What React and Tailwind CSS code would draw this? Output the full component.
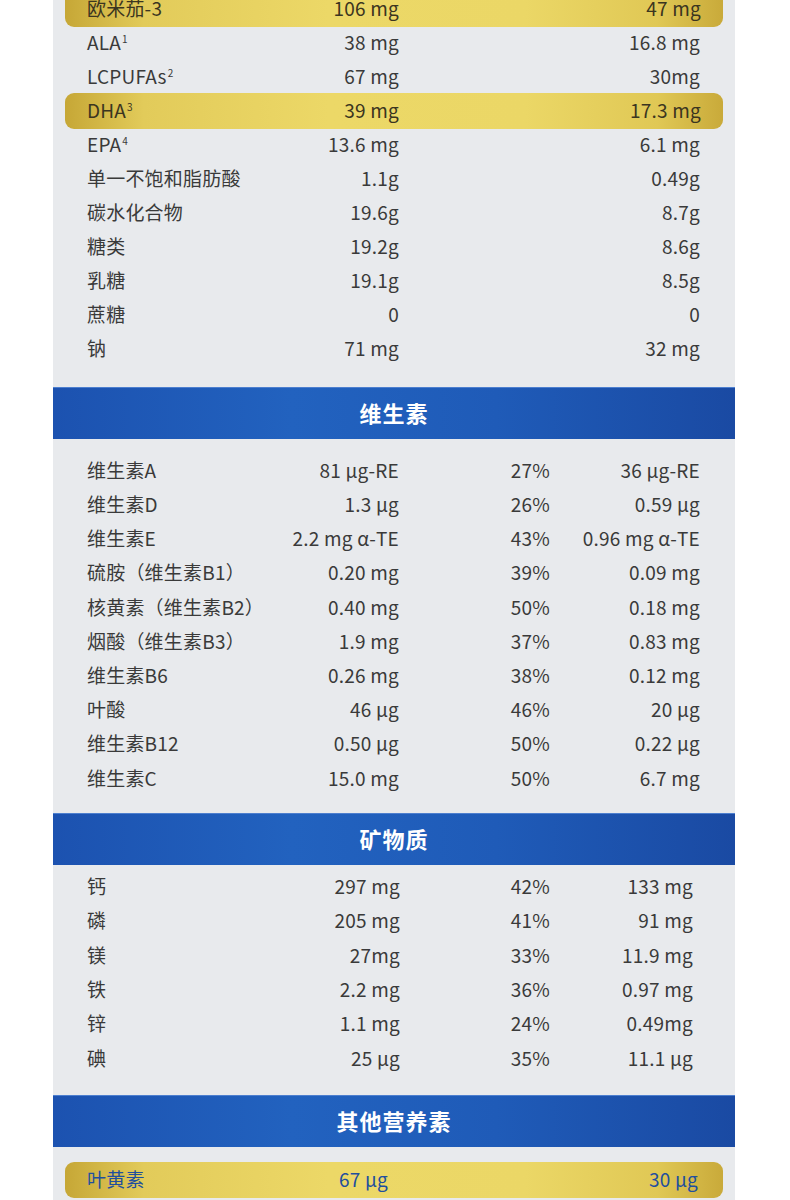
import React from "react";

const FONT = { fontFamily: '"Noto Sans CJK SC", "Noto Sans", sans-serif' };

const Sup = ({ n }) => (
  <sup className="text-[10px] relative -top-[7px] ml-[1px]">{n}</sup>
);

const sec1 = [
  { l: "欧米茄-3", a: "106 mg", b: "47 mg", y: true },
  { l: <>ALA<Sup n="1" /></>, a: "38 mg", b: "16.8 mg" },
  { l: <>LCPUFAs<Sup n="2" /></>, a: "67 mg", b: "30mg" },
  { l: <>DHA<Sup n="3" /></>, a: "39 mg", b: "17.3 mg", y: true },
  { l: <>EPA<Sup n="4" /></>, a: "13.6 mg", b: "6.1 mg" },
  { l: "单一不饱和脂肪酸", a: "1.1g", b: "0.49g" },
  { l: "碳水化合物", a: "19.6g", b: "8.7g" },
  { l: "糖类", a: "19.2g", b: "8.6g" },
  { l: "乳糖", a: "19.1g", b: "8.5g" },
  { l: "蔗糖", a: "0", b: "0" },
  { l: "钠", a: "71 mg", b: "32 mg" },
];

const vit = [
  ["维生素A", "81 µg-RE", "27%", "36 µg-RE"],
  ["维生素D", "1.3 µg", "26%", "0.59 µg"],
  ["维生素E", "2.2 mg α-TE", "43%", "0.96 mg α-TE"],
  ["硫胺（维生素B1）", "0.20 mg", "39%", "0.09 mg"],
  ["核黄素（维生素B2）", "0.40 mg", "50%", "0.18 mg"],
  ["烟酸（维生素B3）", "1.9 mg", "37%", "0.83 mg"],
  ["维生素B6", "0.26 mg", "38%", "0.12 mg"],
  ["叶酸", "46 µg", "46%", "20 µg"],
  ["维生素B12", "0.50 µg", "50%", "0.22 µg"],
  ["维生素C", "15.0 mg", "50%", "6.7 mg"],
];

const min = [
  ["钙", "297 mg", "42%", "133 mg"],
  ["磷", "205 mg", "41%", "91 mg"],
  ["镁", "27mg", "33%", "11.9 mg"],
  ["铁", "2.2 mg", "36%", "0.97 mg"],
  ["锌", "1.1 mg", "24%", "0.49mg"],
  ["碘", "25 µg", "35%", "11.1 µg"],
];

const yellowBg =
  "bg-[linear-gradient(90deg,#c6a736_0%,#e2cb5a_12%,#ecd867_40%,#ebd766_70%,#e0c855_90%,#c9aa3a_100%)]";

const Header = ({ title }) => (
  <div className="h-[52px] pb-[2px] flex items-center justify-center bg-[linear-gradient(90deg,#1c52b0_0%,#2262bf_35%,#1f5bb8_65%,#1a4aa3_100%)] border-t border-[#4d7fcf]">
    <span className="text-white font-bold text-[22px] tracking-[1px]">{title}</span>
  </div>
);

export default function App() {
  return (
    <div className="w-[790px] h-[1200px] bg-white overflow-hidden" style={FONT}>
      <div className="ml-[53px] w-[682px] h-[1220px] bg-[#e8eaed] text-[19px] text-[#3a3a3a] -mt-[8px] tracking-[0.2px]">
        {/* Section 1 */}
        <div>
          {sec1.map((r, i) =>
            r.y ? (
              <div key={i} className="h-[34px] px-[12px] flex items-center">
                <div
                  className={`h-[36px] w-full rounded-[9px] ${yellowBg} grid grid-cols-[160px_152px_1fr] items-center pl-[22px] pr-[22px] pb-[2px] text-[#3b3520]`}
                >
                  <div>{r.l}</div>
                  <div className="text-right">{r.a}</div>
                  <div className="text-right">{r.b}</div>
                </div>
              </div>
            ) : (
              <div
                key={i}
                className="h-[34px] pb-[2px] grid grid-cols-[160px_152px_301px] items-center pl-[34px]"
              >
                <div>{r.l}</div>
                <div className="text-right">{r.a}</div>
                <div className="text-right">{r.b}</div>
              </div>
            )
          )}
        </div>

        <div className="mt-[21px]">
          <Header title="维生素" />
        </div>
        <div className="mt-[15px]">
          {vit.map((r, i) => (
            <div
              key={i}
              className="h-[34.2px] pb-[2px] grid grid-cols-[160px_152px_151px_150px] items-center pl-[34px]"
            >
              <div className="whitespace-nowrap">{r[0]}</div>
              <div className="text-right whitespace-nowrap">{r[1]}</div>
              <div className="text-right">{r[2]}</div>
              <div className="text-right whitespace-nowrap">{r[3]}</div>
            </div>
          ))}
        </div>

        <div className="mt-[17px]">
          <Header title="矿物质" />
        </div>
        <div className="mt-[5px]">
          {min.map((r, i) => (
            <div
              key={i}
              className="h-[34.4px] pb-[2px] grid grid-cols-[160px_153px_150px_143px] items-center pl-[34px]"
            >
              <div>{r[0]}</div>
              <div className="text-right">{r[1]}</div>
              <div className="text-right">{r[2]}</div>
              <div className="text-right">{r[3]}</div>
            </div>
          ))}
        </div>

        <div className="mt-[19px]">
          <Header title="其他营养素" />
        </div>
        <div className="mt-[15px] px-[12px]">
          <div
            className={`h-[36px] pb-[2px] rounded-[9px] ${yellowBg} grid grid-cols-[160px_141px_1fr] items-center pl-[22px] pr-[25px] text-[#1f4f9e]`}
          >
            <div>叶黄素</div>
            <div className="text-right">67 µg</div>
            <div className="text-right">30 µg</div>
          </div>
        </div>
      </div>
    </div>
  );
}
